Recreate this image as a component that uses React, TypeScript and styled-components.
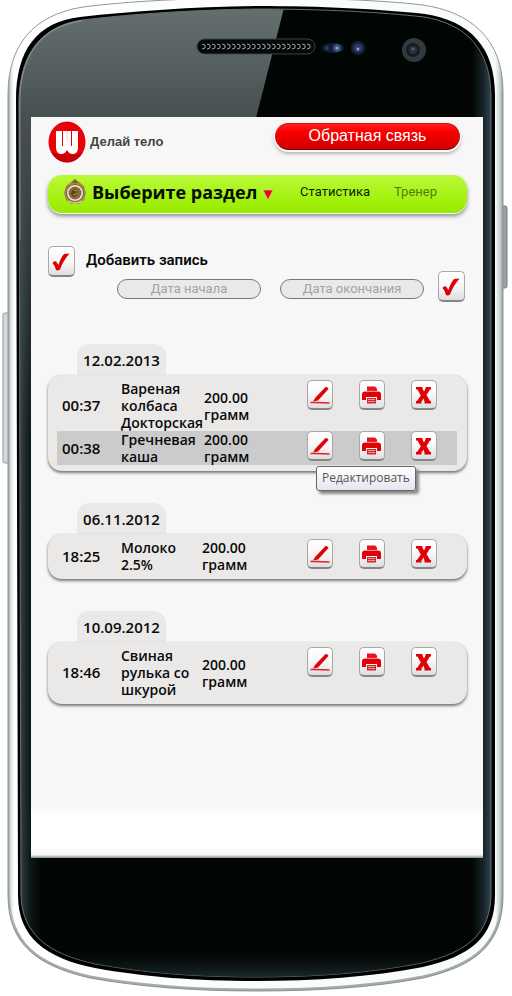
import React from "react";
import styled, { createGlobalStyle, css } from "styled-components";

const GlobalStyle = createGlobalStyle`
  *, *::before, *::after { box-sizing: border-box; }
  body {
    margin: 0;
    background: #fff;
    color: #0a0a0a;
    font-family: "Noto Sans", "Open Sans", sans-serif;
  }
`;

const caption = css`
  font-size: 14px;
  line-height: 17px;
  font-weight: 600;
  font-family: "Open Sans", "Noto Sans", sans-serif;
`;

const Phone = styled.div`
  position: relative;
  padding: 117px 29px 138px 31px;
`;

const PhoneArt = styled.svg`
  position: absolute;
  inset: 0;
  width: 100%;
  height: 100%;
`;

const Screen = styled.main`
  position: relative;
  background: #f7f7f7;
`;

const Content = styled.div`
  padding: 4px 16px 102px 17px;
`;

const ScreenFoot = styled.div`
  height: 52px;
  background: linear-gradient(#f7f7f7, #fff 8px, #fff 42px, #f4f4f4 49px, #888);
`;

const Header = styled.header`
  display: flex;
  align-items: flex-start;
  justify-content: space-between;
  height: 54px;
  padding-right: 7px;
`;

const Brand = styled.a`
  display: flex;
  align-items: center;
  gap: 4px;
  color: #444;
  font: bold 13px/20px "Liberation Sans", Arial, sans-serif;
  text-decoration: none;
`;

const FeedbackButton = styled.button`
  width: 185px;
  height: 27px;
  margin-top: 2px;
  padding: 0 0 2px;
  border: 1px solid #d31010;
  border-bottom-color: #8d0000;
  border-radius: 14px;
  background: linear-gradient(#ff2020, #fb0000 30%, #cf0000);
  box-shadow: 0 1px 0 1px #fff, 0 3px 4px #999;
  color: #fff;
  font: 16px/22px "Liberation Sans", Arial, sans-serif;
  white-space: nowrap;
`;

const Nav = styled.nav`
  display: flex;
  align-items: center;
  height: 38px;
  padding: 0 30px 4px 15px;
  border-radius: 14px;
  background: linear-gradient(#baf93a, #a6f312 55%, #98ea00);
  box-shadow: 0 1px 0 #fff, 0 3px 4px #888;
`;

const SectionButton = styled.button`
  display: flex;
  align-items: center;
  gap: 5px;
  padding: 0;
  border: 0;
  background: none;
  color: #060c00;
  font: 700 18px/26px "Open Sans", "Noto Sans", sans-serif;
  white-space: nowrap;

  svg:last-child { margin-top: 5px; }
`;

const NavLink = styled.a<{ $muted?: boolean }>`
  margin-left: ${(p) => (p.$muted ? "24px" : "auto")};
  color: ${(p) => (p.$muted ? "#557a10" : "#141c00")};
  font: 13px/20px Roboto, sans-serif;
  text-decoration: none;
`;

const AddRow = styled.div`
  display: flex;
  align-items: center;
  gap: 11px;
  margin-top: 33px;
`;

const AddLabel = styled.label`
  padding-bottom: 3px;
  font: 600 15px/17px Roboto, sans-serif;
`;

const FilterForm = styled.form`
  display: flex;
  align-items: center;
  gap: 19px;
  margin-top: -6px;
  padding: 0 2px 0 69px;
`;

const DateInput = styled.input`
  flex: 1;
  min-width: 0;
  height: 20px;
  margin-bottom: -4px;
  padding: 0 8px;
  border: 1px solid #777;
  border-radius: 10px;
  background: #ebe9e8;
  color: #333;
  font: 13px/18px Roboto, sans-serif;
  text-align: center;

  &::placeholder { color: #a3a3a3; opacity: 1; }
  &:last-of-type { margin-right: -5px; }
`;

const IconButton = styled.button<{ $small?: boolean }>`
  position: relative;
  display: block;
  flex: none;
  width: ${(p) => (p.$small ? "26px" : "27px")};
  height: ${(p) => (p.$small ? "30px" : "31px")};
  padding: 0;
  border: 1px solid #a8a8a8;
  border-bottom: 2px solid #858585;
  border-radius: 5px;
  background: linear-gradient(#fff, #f8f8f8 50%, #dedede);

  svg { display: block; width: 25px; height: 27px; }
`;

const Groups = styled.div`
  display: flex;
  flex-direction: column;
  gap: 32px;
  margin-top: 42px;
`;

const DateTab = styled.h2`
  ${caption}
  width: 89px;
  height: 31px;
  margin: 0 0 0 29px;
  padding-top: 8px;
  border-radius: 12px 12px 0 0;
  background: #ebe9e8;
  font-size: 15px;
  text-align: center;
`;

const Card = styled.div`
  padding: 5px 10px 6px 9px;
  border-radius: 14px;
  background: #ebe9e8;
  box-shadow: 0 2px 3px #777, 0 0 1px #ccc;
`;

const Table = styled.table`
  width: 100%;
  border-collapse: collapse;
  ${caption}
`;

const Row = styled.tr<{ $active?: boolean }>`
  background: ${(p) => (p.$active ? "#cbcbcb" : "transparent")};
`;

const Cell = styled.td<{ $w?: number; $pad?: number }>`
  width: ${(p) => (p.$w ? `${p.$w}px` : "auto")};
  padding: 0 0 0 ${(p) => p.$pad ?? 0}px;
  vertical-align: middle;
`;

const ActionCell = styled(Cell)`
  height: 34px;
  vertical-align: top;
`;

const Amount = styled.div`
  max-width: 56px;
`;

const Time = styled.time`
  font-size: 15px;
`;

const Tooltip = styled.span`
  position: absolute;
  z-index: 1;
  top: 34px;
  left: 8px;
  padding: 2px 5px 3px;
  border: 1px solid #666;
  border-radius: 3px;
  background: linear-gradient(#fff, #e6e6f2);
  box-shadow: 3px 3px 3px #888;
  color: #555;
  font: 12px/18px "Open Sans", "Noto Sans", sans-serif;
  white-space: nowrap;
`;

const OUTER =
  "M8 95C8 45 33 15 83 7C130 1 190 -2 256 -2C322 -2 380 0 423 5C470 12 503 38 503 92V895C503 945 475 966 423 978C370 988 315 991 256 991C195 991 140 987 90 978C38 966 8 945 8 895Z";
const INNER =
  "M16 100C16 50 37 22 80 17C133 11 190 7 256 6C322 6 380 9 425 14C470 21 495 47 495 95V895C495 938 470 956 423 967C370 977 315 981 256 981C195 981 145 977 95 968C45 958 18 937 18 895Z";
const GLASS =
  "M19 100C20 54 41 26 82 20C133 14 190 10 256 9C322 9 380 12 424 17C466 24 491 49 491 97V893C491 934 467 952 422 963C370 973 315 977 256 977C195 977 145 973 96 964C48 954 21 934 21 893Z";

const PhoneFrame = () => (
  <PhoneArt viewBox="0 0 512 996" preserveAspectRatio="none" aria-hidden="true">
    <defs>
      <linearGradient id="rim" x1="8" x2="503" y1="0" y2="0" gradientUnits="userSpaceOnUse">
        <stop offset="0" stopColor="#8e9899" />
        <stop offset=".006" stopColor="#dfe5e5" />
        <stop offset=".012" stopColor="#fff" />
        <stop offset=".985" stopColor="#f8fafa" />
        <stop offset=".995" stopColor="#c3caca" />
        <stop offset="1" stopColor="#8d9595" />
      </linearGradient>
      <linearGradient id="rimBase" x1="0" x2="0" y1="890" y2="991" gradientUnits="userSpaceOnUse">
        <stop offset="0" stopColor="#7f8989" stopOpacity="0" />
        <stop offset=".4" stopColor="#7f8989" />
        <stop offset="1" stopColor="#7f8989" />
      </linearGradient>
      <linearGradient id="glass" x1="19" x2="491" y1="0" y2="0" gradientUnits="userSpaceOnUse">
        <stop offset="0" stopColor="#3f494b" />
        <stop offset=".01" stopColor="#263033" />
        <stop offset=".025" stopColor="#0c1718" />
        <stop offset=".05" stopColor="#010504" />
        <stop offset=".96" stopColor="#010504" />
        <stop offset=".985" stopColor="#18272d" />
        <stop offset="1" stopColor="#34444b" />
      </linearGradient>
      <linearGradient id="glare" x1="0" x2="0" y1="0" y2="1">
        <stop offset="0" stopColor="#677172" />
        <stop offset=".5" stopColor="#596263" />
        <stop offset="1" stopColor="#474f51" />
      </linearGradient>
      <linearGradient id="glareEdge" x1="0" x2="0" y1="0" y2="1">
        <stop offset="0" stopColor="#474f51" />
        <stop offset="1" stopColor="#474f51" stopOpacity="0" />
      </linearGradient>
      <linearGradient id="base" x1="0" x2="0" y1="945" y2="978" gradientUnits="userSpaceOnUse">
        <stop offset="0" stopColor="#010504" stopOpacity="0" />
        <stop offset="1" stopColor="#1b2b2c" />
      </linearGradient>
      <pattern id="mesh" x="201" y="43" width="5" height="7" patternUnits="userSpaceOnUse">
        <path d="M1 1L4 2V5L1 6" fill="none" stroke="#9a9e9e" />
      </pattern>
      <clipPath id="glassClip">
        <path d={GLASS} />
      </clipPath>
      <clipPath id="rimClip">
        <path d={OUTER} />
      </clipPath>
    </defs>
    <rect x="3" y="313" width="7" height="150" rx="2" fill="#d5dbde" stroke="#8d999e" />
    <rect x="500" y="206" width="7" height="82" rx="2" fill="#9aa3a4" stroke="#727c7d" />
    <path d={OUTER} fill="url(#rim)" stroke="#8f9898" />
    <g clipPath="url(#rimClip)">
      <path d={OUTER} fill="none" stroke="url(#rimBase)" strokeWidth="5" opacity=".7" />
    </g>
    <path d={INNER} fill="#000" />
    <path d={GLASS} fill="url(#glass)" stroke="#667072" />
    <g clipPath="url(#glassClip)">
      <path d="M14 0H286L256 118H14Z" fill="url(#glare)" />
      <rect x="14" y="118" width="18" height="320" fill="url(#glareEdge)" />
      <path d="M19 240V100C20 54 41 26 82 20" fill="none" stroke="#9aa4a5" strokeWidth="3" opacity=".6" />
      <rect x="14" y="945" width="480" height="35" fill="url(#base)" />
    </g>
    <rect x="197" y="39" width="118" height="15" rx="7.5" fill="#050909" stroke="#3c4445" />
    <rect x="201" y="43" width="110" height="7" rx="3.5" fill="url(#mesh)" />
    <ellipse cx="333" cy="48" rx="11" ry="5" fill="#141f36" />
    <circle cx="337" cy="48" r="4" fill="#34507f" />
    <circle cx="337" cy="48" r="1.5" fill="#8ba5cf" />
    <circle cx="327" cy="48" r="1.5" fill="#33486c" />
    <circle cx="358" cy="48" r="7" fill="#17213a" />
    <circle cx="358" cy="48" r="4" fill="#2a3f6b" />
    <circle cx="358" cy="49" r="1.5" fill="#87a0cc" />
    <circle cx="414" cy="50" r="12" fill="#313a3c" />
    <circle cx="413" cy="50" r="7" fill="#141d21" />
    <circle cx="413" cy="50" r="4" fill="#26333c" />
    <circle cx="413" cy="49" r="1.5" fill="#52626e" />
  </PhoneArt>
);

const Logo = () => (
  <svg width="38" height="42" viewBox="0 0 38 42" aria-hidden="true">
    <ellipse cx="19" cy="21" rx="18.5" ry="20.5" fill="#ea0008" />
    <path d="M3 31A18.5 20.5 0 0 0 35 31Q19 38 3 31Z" fill="#c40008" />
    <path
      d="M8 10H30V26Q30 33 25 33Q21 33 19 29Q17 33 13 33Q8 33 8 26Z"
      fill="#fff"
    />
    <path d="M14.5 10V25M23.5 10V25" stroke="#e00008" />
    <path d="M19 10V20" stroke="#f6c4c4" strokeWidth=".8" />
  </svg>
);

const Emblem = () => (
  <svg width="24" height="28" viewBox="0 0 24 28" aria-hidden="true">
    <path d="M12 1L16 4L21 8L23 15L21 22L16 26H8L3 22L1 15L3 8L8 4Z" fill="#a08a3f" />
    <path d="M12 1L15 5H9Z" fill="#7a6428" />
    <circle cx="12" cy="15" r="8.5" fill="#f1e8df" stroke="#7c5c3c" />
    <circle cx="12" cy="15" r="6.5" fill="#8a6a35" />
    <path d="M9 13L12 10L15 14L12 15L14 18L10 19L8 16Z" fill="#5b4420" />
    <path d="M11 12L14 13M10 17L13 16" stroke="#b8965a" />
    <path d="M5 23Q12 27 19 23" fill="none" stroke="#d8c27c" strokeWidth="2" />
  </svg>
);

const Arrow = () => (
  <svg width="12" height="12" viewBox="0 0 12 12" aria-hidden="true">
    <path d="M1 1H11L6 11Z" fill="#e30a14" stroke="#f2b0a0" strokeWidth=".8" />
  </svg>
);

const CheckIcon = () => (
  <svg viewBox="1 1 25 27" aria-hidden="true">
    <path d="M4.5 16Q6 13.500 8 14.500L10.500 18Q12.500 11 16 7L21.500 6.500Q15 14 12 22.500Q10 24 8 23Q7 18.500 4.500 16Z" fill="#de0008" />
  </svg>
);

const EditIcon = () => (
  <svg viewBox="1 1 25 27" aria-hidden="true">
    <path d="M6 21.500L8.500 17.500L18.500 7Q20.500 6.500 21.500 9L11 20.500Z" fill="#e00008" />
    <path d="M3.500 22.500H8L22.500 23" fill="none" stroke="#e0202a" strokeWidth="1.500" />
  </svg>
);

const PrintIcon = () => (
  <svg viewBox="1 1 25 27" aria-hidden="true">
    <path d="M8 6.500H16L18 8.500V11H8Z" fill="#e8121a" />
    <path d="M6 11.500H19Q22 11.500 22 14.500V20H18V17H7V20H3V14.500Q3 11.500 6 11.500Z" fill="#e00008" />
    <path d="M8 18H17V23.500H8Z" fill="#d8222a" />
    <path d="M9 19.500H16M9 21.500H16" stroke="#f6b5b5" strokeWidth=".8" />
    <path d="M6 11.300H19" stroke="#f6a0a0" strokeWidth=".6" />
  </svg>
);

const DeleteIcon = () => (
  <svg viewBox="1 1 25 27" aria-hidden="true">
    <path
      d="M5 7H11.500V8.500L13 11.500L14.500 8.500V7H20V9.500H19L15.500 15L19 21H20V23.500H13.500V21.500L12.500 18.500L10.500 21.500V23.500H5V21H6L9.800 15.500L6.500 9.500H5Z"
      fill="#e00008"
    />
  </svg>
);

type Entry = { time: string; name: string; amount: string; active?: boolean };

const DIARY: { date: string; entries: Entry[] }[] = [
  {
    date: "12.02.2013",
    entries: [
      { time: "00:37", name: "Вареная колбаса Докторская", amount: "200.00 грамм" },
      { time: "00:38", name: "Гречневая каша", amount: "200.00 грамм", active: true },
    ],
  },
  { date: "06.11.2012", entries: [{ time: "18:25", name: "Молоко 2.5%", amount: "200.00 грамм" }] },
  { date: "10.09.2012", entries: [{ time: "18:46", name: "Свиная рулька со шкурой", amount: "200.00 грамм" }] },
];

const EntryRow = ({ time, name, amount, active }: Entry) => (
  <Row $active={active}>
    <Cell $w={64} $pad={5}><Time>{time}</Time></Cell>
    <Cell $w={80}>{name}</Cell>
    <Cell $pad={1}><Amount>{amount}</Amount></Cell>
    <ActionCell $w={52}>
      <IconButton $small type="button" aria-label="Редактировать">
        <EditIcon />
        {active && <Tooltip role="tooltip">Редактировать</Tooltip>}
      </IconButton>
    </ActionCell>
    <ActionCell $w={52}>
      <IconButton $small type="button" aria-label="Печать"><PrintIcon /></IconButton>
    </ActionCell>
    <ActionCell $w={46}>
      <IconButton $small type="button" aria-label="Удалить"><DeleteIcon /></IconButton>
    </ActionCell>
  </Row>
);

export default function App() {
  return (
    <>
      <GlobalStyle />
      <Phone>
        <PhoneFrame />
        <Screen>
          <Content>
            <Header>
              <Brand href="#home"><Logo />Делай тело</Brand>
              <FeedbackButton type="button">Обратная связь</FeedbackButton>
            </Header>
            <Nav>
              <SectionButton type="button" aria-haspopup="menu">
                <Emblem />Выберите раздел<Arrow />
              </SectionButton>
              <NavLink href="#stats">Статистика</NavLink>
              <NavLink href="#coach" $muted>Тренер</NavLink>
            </Nav>
            <AddRow>
              <IconButton type="button" id="add-entry"><CheckIcon /></IconButton>
              <AddLabel htmlFor="add-entry">Добавить запись</AddLabel>
            </AddRow>
            <FilterForm>
              <DateInput aria-label="Дата начала" placeholder="Дата начала" />
              <DateInput aria-label="Дата окончания" placeholder="Дата окончания" />
              <IconButton type="button" aria-label="Применить"><CheckIcon /></IconButton>
            </FilterForm>
            <Groups>
              {DIARY.map((group) => (
                <section key={group.date}>
                  <DateTab>{group.date}</DateTab>
                  <Card>
                    <Table aria-label={group.date}>
                      <tbody>
                        {group.entries.map((entry) => (
                          <EntryRow key={entry.time} {...entry} />
                        ))}
                      </tbody>
                    </Table>
                  </Card>
                </section>
              ))}
            </Groups>
          </Content>
          <ScreenFoot />
        </Screen>
      </Phone>
    </>
  );
}
